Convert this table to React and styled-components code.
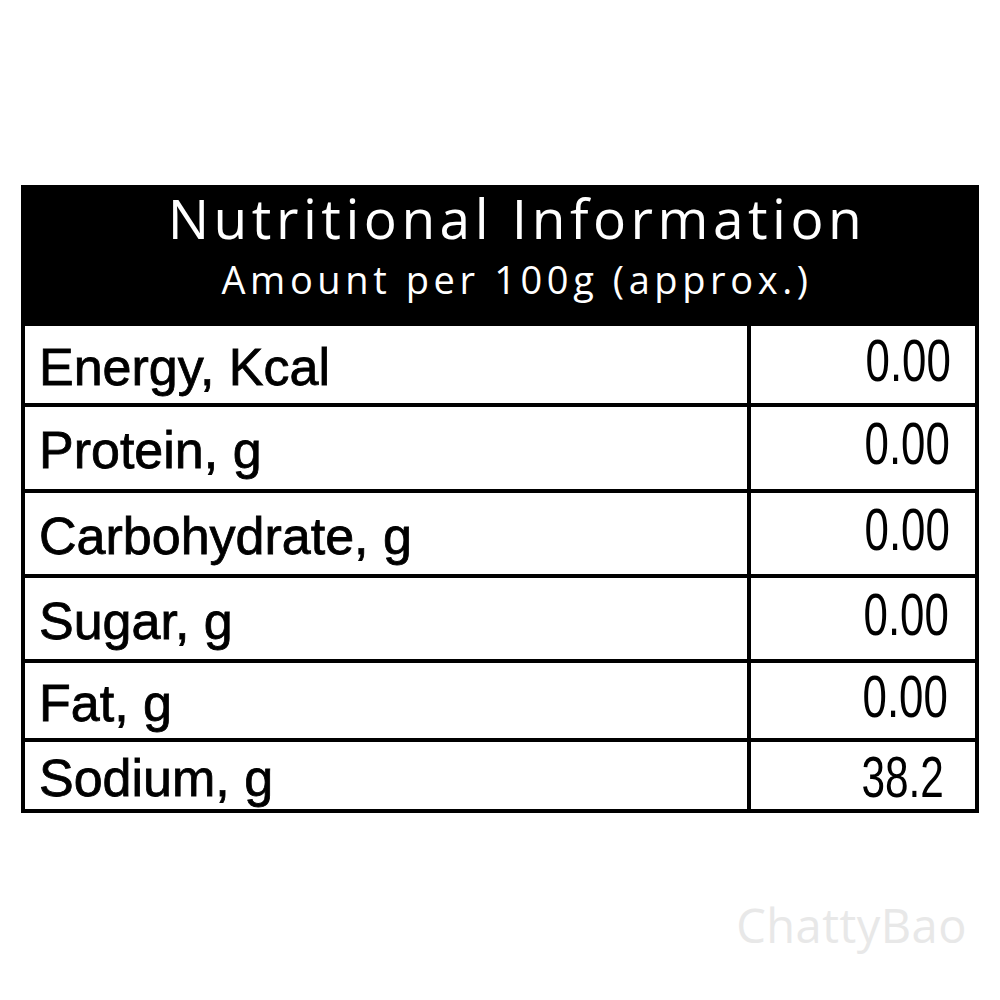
import React from "react";
import styled, { createGlobalStyle } from "styled-components";

const Global = createGlobalStyle`
  html, body { margin: 0; padding: 0; background: #fff; }
  body { width: 1000px; height: 1000px; overflow: hidden; }
`;

const Page = styled.div`
  width: 1000px;
  height: 1000px;
  box-sizing: border-box;
  padding: 185px 21px 0 21px;
  display: flex;
  flex-direction: column;
  background: #fff;
`;

const Table = styled.div`
  width: 958px;
  box-sizing: border-box;
  border: 4px solid #000;
  display: flex;
  flex-direction: column;
`;

const Header = styled.div`
  height: 137px;
  background: #000;
  color: #fff;
  display: flex;
  flex-direction: column;
  align-items: center;
  padding-left: 34px;
  box-sizing: border-box;
  font-family: "Open Sans", "DejaVu Sans", sans-serif;
`;

const Title = styled.div`
  font-size: 55px;
  letter-spacing: 4.5px;
  line-height: 1;
  margin-top: 1px;
  white-space: nowrap;
`;

const Subtitle = styled.div`
  font-size: 38px;
  letter-spacing: 4.6px;
  line-height: 1;
  margin-top: 15px;
  white-space: nowrap;
`;

const Row = styled.div`
  display: grid;
  grid-template-columns: 722px 1fr;
  height: ${(p) => p.$h}px;
  box-sizing: border-box;
  border-bottom: ${(p) => (p.$last ? "none" : "4px solid #000")};
`;

const Label = styled.div`
  display: flex;
  align-items: center;
  padding: 4px 0 0 14px;
  font-family: "Liberation Sans", Arial, sans-serif;
  font-size: 52px;
  color: #000;
  -webkit-text-stroke: 0.8px #000;
  white-space: nowrap;
`;

const ValueCell = styled.div`
  border-left: 4px solid #000;
  display: flex;
  align-items: center;
  justify-content: flex-end;
  padding: ${(p) => (p.$pb < 0 ? -p.$pb : 0)}px ${(p) => p.$pr}px
    ${(p) => (p.$pb > 0 ? p.$pb : 0)}px 0;
`;

const Value = styled.span`
  display: inline-block;
  font-family: "Liberation Sans", Arial, sans-serif;
  font-size: ${(p) => p.$size || 60}px;
  line-height: 1;
  transform: scaleX(0.73);
  transform-origin: right center;
  color: #000;
  white-space: nowrap;
`;

const Watermark = styled.div`
  align-self: flex-end;
  margin-top: 80px;
  margin-right: 12px;
  font-family: "Open Sans", "DejaVu Sans", sans-serif;
  font-size: 47px;
  color: #e8e8e8;
  letter-spacing: 0.5px;
`;

const rows = [
  { label: "Energy, Kcal", value: "0.00", h: 81, pr: 24, pb: 8 },
  { label: "Protein, g", value: "0.00", h: 86, pr: 25, pb: 8 },
  { label: "Carbohydrate, g", value: "0.00", h: 85, pr: 25, pb: 8 },
  { label: "Sugar, g", value: "0.00", h: 85, pr: 26, pb: 8 },
  { label: "Fat, g", value: "0.00", h: 79, pr: 27, pb: 8 },
  { label: "Sodium, g", value: "38.2", h: 67, pr: 31, pb: -2, size: 58, last: true },
];

export default function App() {
  return (
    <>
      <Global />
      <Page>
        <Table>
          <Header>
            <Title>Nutritional Information</Title>
            <Subtitle>Amount per 100g (approx.)</Subtitle>
          </Header>
          {rows.map((r) => (
            <Row key={r.label} $h={r.h} $last={r.last}>
              <Label>{r.label}</Label>
              <ValueCell $pr={r.pr} $pb={r.pb}>
                <Value $size={r.size}>{r.value}</Value>
              </ValueCell>
            </Row>
          ))}
        </Table>
        <Watermark>ChattyBao</Watermark>
      </Page>
    </>
  );
}
